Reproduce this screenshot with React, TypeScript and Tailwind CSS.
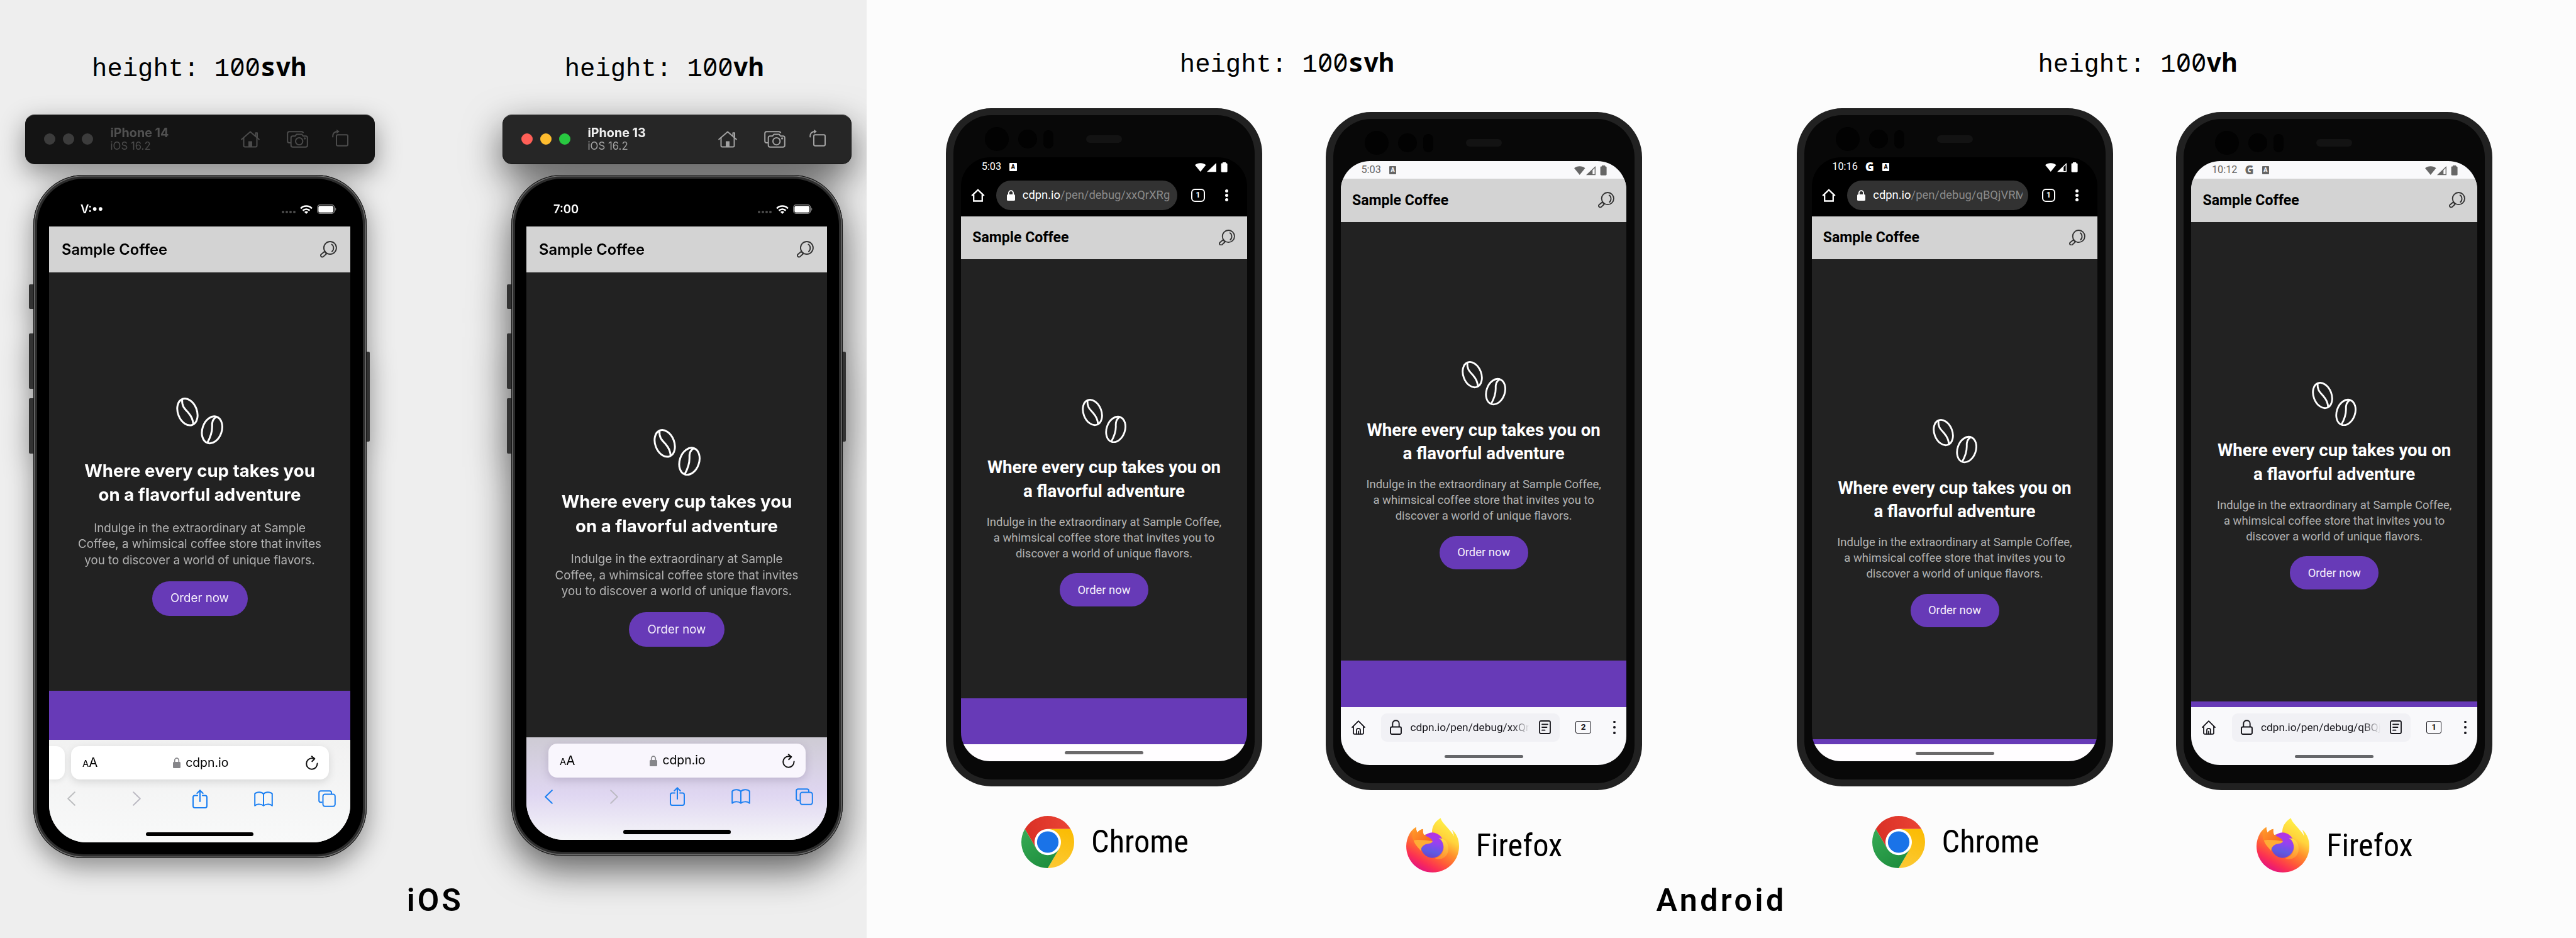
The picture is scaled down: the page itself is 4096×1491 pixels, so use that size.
import type { ReactNode } from "react";

/* ------------------------------------------------------------------ icons */

function Beans({ className }: { className: string }) {
  return (
    <svg className={className} viewBox="0 0 75 74.5" preserveAspectRatio="none" fill="none" stroke="#fff" strokeWidth="3">
      <ellipse cx="18" cy="22.8" rx="15.1" ry="22" transform="rotate(-21 18 22.8)" />
      <path d="M9.6 3.2C9 14 13.500 17.500 19 23.500C25 30.500 26.500 35 27.600 43" />
      <ellipse cx="57.2" cy="51.3" rx="15.400" ry="22" transform="rotate(19 57.2 51.3)" />
      <path d="M64.8 30C58 34 56.800 39 57.300 46.500C57.400 56 54 64 49.600 72" />
    </svg>
  );
}

function Magnifier({ className }: { className: string }) {
  return (
    <svg className={className} viewBox="0 0 27 26.500" preserveAspectRatio="none" fill="none" stroke="#333" strokeWidth="1.900">
      <circle cx="15.900" cy="11" r="10" />
      <path d="M18.400 5.500C22 7.500 22.400 14 18.900 16.800" strokeLinecap="round" />
      <path d="M8.400 18.300L10 20.500L5.200 24.900C3.800 26 2 25.500 1.300 24.200C0.700 23 1 21.800 2 21L6.800 17.100Z" strokeLinejoin="round" />
    </svg>
  );
}

function SimHome() {
  return (
    <svg className="h-[27px] w-[30px]" viewBox="0 0 30 27" fill="none" stroke="currentColor" strokeWidth="2" strokeLinecap="round" strokeLinejoin="round">
      <path d="M1.200 13.500L15 1.500L28.800 13.500M23.500 8.500V3.200H26V10.500" />
      <path d="M4.500 12V23.500C4.500 24.800 5.200 25.500 6.500 25.500H23.500C24.800 25.500 25.500 24.800 25.500 23.500V12" />
      <path d="M12 16.500H18V25H12Z" fill="currentColor" stroke="none" />
    </svg>
  );
}

function SimCamera() {
  return (
    <svg className="h-[27px] w-[34px]" viewBox="0 0 34 27" fill="none" stroke="currentColor" strokeWidth="2" strokeLinejoin="round">
      <path d="M6.500 19H4C2.200 19 1.200 18 1.200 16.200V4C1.200 2.200 2.200 1.200 4 1.200H23.500C25 1.200 26 2 26.400 3.600" />
      <path d="M9.500 8.200H13.500L15.500 5.600H24L26 8.200H30C31.800 8.200 32.800 9.200 32.800 11V23C32.800 24.800 31.800 25.800 30 25.800H9.500C7.700 25.800 6.700 24.800 6.700 23V11C6.700 9.200 7.700 8.200 9.500 8.200Z" />
      <circle cx="19.700" cy="16.600" r="5.700" />
      <circle cx="28.600" cy="12" r="0.700" />
    </svg>
  );
}

function SimRotate() {
  return (
    <svg className="h-[28px] w-[26px]" viewBox="0 0 26 28" fill="none" stroke="currentColor" strokeWidth="2" strokeLinejoin="round">
      <rect x="7" y="9.200" width="18" height="17.500" rx="2.200" />
      <path d="M1.200 12.500C0.800 7 3.500 4 10 4" strokeLinecap="round" />
      <path d="M7.200 0.800L11.800 4.100L7.200 7.400Z" fill="currentColor" stroke="none" />
    </svg>
  );
}

function IosWifi() {
  return (
    <svg className="h-[14px] w-[20px]" viewBox="0 0 20 14" fill="none" stroke="#fff" strokeWidth="2.600">
      <path d="M1.100 5.300C6 0.300 14 0.300 18.900 5.300" />
      <path d="M4.500 8.800C7.600 5.800 12.400 5.800 15.500 8.800" />
      <path d="M6.900 11C8.700 9.300 11.300 9.300 13.100 11L10 14Z" fill="#fff" stroke="none" />
    </svg>
  );
}

function IosBattery() {
  return (
    <svg className="h-[15px] w-[31px]" viewBox="0 0 31 15" fill="none">
      <rect x="0.700" y="0.700" width="27" height="13.600" rx="4" stroke="#8a8a8a" strokeWidth="1.200" />
      <rect x="2.300" y="2.200" width="23.800" height="10.600" rx="2.500" fill="#fff" />
      <path d="M29.200 5V10C30.700 9.300 30.700 5.700 29.200 5Z" fill="#8a8a8a" />
    </svg>
  );
}

function SolidLock({ className }: { className: string }) {
  return (
    <svg className={className} viewBox="0 0 12 17" preserveAspectRatio="none" fill="none">
      <path d="M2.700 8V4.800C2.700 0 9.300 0 9.300 4.800V8" stroke="currentColor" strokeWidth="1.700" />
      <rect y="7" width="12" height="10" rx="1.600" fill="currentColor" />
    </svg>
  );
}

function Refresh() {
  return (
    <svg className="h-[23px] w-[20px]" viewBox="0 0 20 23" fill="none" stroke="#111" strokeWidth="2" strokeLinecap="round" strokeLinejoin="round">
      <path d="M18.600 12.600C18.600 17.600 14.800 21.700 9.900 21.700C5 21.700 1.200 17.700 1.200 12.900C1.200 8 5.200 4.200 9.900 4.200C11.200 4.200 12.500 4.400 13.700 4.900" />
      <path d="M9.800 1.200L14.300 5L10.300 9.200" />
    </svg>
  );
}

function Chevron({ flip, className }: { flip?: boolean; className: string }) {
  return (
    <svg className={className} viewBox="0 0 13 23" fill="none" stroke="currentColor" strokeWidth="2" strokeLinecap="round" strokeLinejoin="round">
      {flip ? <path d="M1.200 1.200L11.800 11.500L1.200 21.800" /> : <path d="M11.800 1.200L1.200 11.500L11.800 21.800" />}
    </svg>
  );
}

function Share() {
  return (
    <svg className="ml-[82px] h-[30px] w-[24px]" viewBox="0 0 24 30" fill="none" stroke="currentColor" strokeWidth="2" strokeLinecap="round" strokeLinejoin="round">
      <path d="M8 9.500H3.800C2 9.500 1 10.500 1 12.300V26C1 27.900 2 28.900 3.800 28.900H20.200C22 28.900 23 27.900 23 26V12.300C23 10.500 22 9.500 20.200 9.500H16" />
      <path d="M12 19V1.300M7.300 6L12 1.300L16.700 6" />
    </svg>
  );
}

function Book() {
  return (
    <svg className="ml-[74px] h-[24px] w-[30px]" viewBox="0 0 30 24" fill="none" stroke="currentColor" strokeWidth="2" strokeLinejoin="round">
      <path d="M15 4C12 0.500 4.500 0.200 1.200 3.700V22.700C4.500 19.500 12 19.700 15 22.700C18 19.700 25.500 19.500 28.800 22.700V3.700C25.500 0.200 18 0.500 15 4ZM15 4V22.700" />
    </svg>
  );
}

function Tabs() {
  return (
    <svg className="ml-[71.500px] h-[27px] w-[28px]" viewBox="0 0 28 27" fill="none" stroke="currentColor" strokeWidth="2" strokeLinejoin="round">
      <path d="M6.500 19.300H4C2.200 19.300 1.200 18.300 1.200 16.500V4C1.200 2.200 2.200 1.200 4 1.200H18.200C20 1.200 21 2.200 21 4V6" />
      <rect x="7.500" y="6.500" width="19.300" height="19.300" rx="3.200" />
    </svg>
  );
}

function AndroidSignals({ hollow }: { hollow?: boolean }) {
  return (
    <svg className="h-[16px] w-[52px]" viewBox="0 0 52 16" fill="currentColor">
      <path d="M0 4.200C4.500 0.300 13 0.300 17.500 4.200L8.750 15Z" />
      {hollow ? (
        <path fillRule="evenodd" d="M34 1V15.300H19ZM32.600 4.300L29.300 7.600V14H32.600Z" />
      ) : (
        <path d="M34 1V15.300H19Z" />
      )}
      <path d="M44 0H49.200V1.600H50.200C51 1.600 51.600 2.200 51.600 3V14.300C51.600 15.100 51 15.700 50.200 15.700H43C42.200 15.700 41.600 15.100 41.600 14.300V3C41.600 2.200 42.200 1.600 43 1.600H44Z" />
    </svg>
  );
}

function ChromeHome() {
  return (
    <svg className="h-[21px] w-[22px]" viewBox="0 0 22 21" fill="none" stroke="#fff" strokeWidth="2.300" strokeLinejoin="miter">
      <path d="M1.200 11.200L11 1.800L20.800 11.200M4.200 9.500V19.500H17.800V9.500" />
    </svg>
  );
}

function FoxHome() {
  return (
    <svg className="h-[23px] w-[22px]" viewBox="0 0 22 23" fill="none" stroke="#15141a" strokeWidth="1.800" strokeLinecap="round" strokeLinejoin="round">
      <path d="M1 11.200L11 1.200L21 11.200M3 9.500V20C3 21.200 3.600 21.900 4.800 21.900H17.200C18.400 21.900 19 21.200 19 20V9.500" />
      <path d="M8 21.500V15.500C8 12 14 12 14 15.500V21.500M11 17.500V21.500" />
    </svg>
  );
}

function FoxLock() {
  return (
    <svg className="h-[24px] w-[19px]" viewBox="0 0 19 24" fill="none" stroke="#15141a" strokeWidth="1.900">
      <path d="M4.300 11.500V6.200C4.300 -0.500 14.700 -0.500 14.700 6.200V11.500" />
      <rect x="1" y="11.500" width="17" height="11.500" rx="2.200" />
    </svg>
  );
}

function FoxReader() {
  return (
    <svg className="h-[22px] w-[19px]" viewBox="0 0 19 22" fill="none" stroke="#15141a" strokeWidth="1.800" strokeLinecap="round">
      <rect x="1" y="1" width="17" height="20" rx="2.200" />
      <path d="M5 6.300H14M5 11H12.500M5 15.700H9.500" />
    </svg>
  );
}

function ChromeLogo() {
  return (
    <svg className="ml-[120px] h-[83px] w-[84px]" viewBox="0 0 48 48" preserveAspectRatio="none">
      <defs>
        <linearGradient id="chromeRed" x1="3" y1="18" x2="45" y2="12" gradientUnits="userSpaceOnUse">
          <stop stopColor="#d93025" />
          <stop offset="1" stopColor="#ea4335" />
        </linearGradient>
        <linearGradient id="chromeYellow" x1="27" y1="47" x2="38" y2="12" gradientUnits="userSpaceOnUse">
          <stop stopColor="#fcc934" />
          <stop offset="1" stopColor="#fbbc04" />
        </linearGradient>
        <linearGradient id="chromeGreen" x1="26" y1="46" x2="5" y2="14" gradientUnits="userSpaceOnUse">
          <stop stopColor="#1e8e3e" />
          <stop offset="1" stopColor="#34a853" />
        </linearGradient>
      </defs>
      <circle cx="24" cy="24" r="12.500" fill="#fff" />
      <path fill="url(#chromeRed)" d="M24 12H44.780A24 24 0 0 0 3.220 12L13.608 30A12 12 0 0 1 24 12Z" />
      <path fill="url(#chromeYellow)" d="M34.392 30L24 48A24 24 0 0 0 44.780 12H24A12 12 0 0 1 34.392 30Z" />
      <path fill="url(#chromeGreen)" d="M13.608 30L3.220 12A24 24 0 0 0 24 48L34.392 30A12 12 0 0 1 13.608 30Z" />
      <circle cx="24" cy="24" r="9.800" fill="#1a73e8" />
    </svg>
  );
}

function FirefoxLogo() {
  return (
    <svg className="ml-[128px] h-[87px] w-[84px]" viewBox="80 47 337 350" preserveAspectRatio="none">
      <defs>
        <linearGradient id="foxBody" x1="370" y1="90" x2="190" y2="395" gradientUnits="userSpaceOnUse">
          <stop stopColor="#fff147" />
          <stop offset="0.260" stopColor="#ffd43c" />
          <stop offset="0.480" stopColor="#ff8f2c" />
          <stop offset="0.680" stopColor="#ff5a38" />
          <stop offset="0.840" stopColor="#fb2f54" />
          <stop offset="1" stopColor="#e31380" />
        </linearGradient>
        <linearGradient id="foxGlobe" x1="270" y1="142" x2="230" y2="303" gradientUnits="userSpaceOnUse">
          <stop stopColor="#bb31e0" />
          <stop offset="0.400" stopColor="#9542f0" />
          <stop offset="0.750" stopColor="#5d5be4" />
          <stop offset="1" stopColor="#6a45c8" />
        </linearGradient>
        <linearGradient id="foxTail" x1="330" y1="180" x2="300" y2="310" gradientUnits="userSpaceOnUse">
          <stop stopColor="#ffe04a" />
          <stop offset="1" stopColor="#ff8c30" />
        </linearGradient>
        <linearGradient id="foxHead" x1="130" y1="110" x2="230" y2="210" gradientUnits="userSpaceOnUse">
          <stop stopColor="#ff9a2a" />
          <stop offset="1" stopColor="#f9651e" />
        </linearGradient>
      </defs>
      <path
        fill="url(#foxBody)"
        d="M142 106C143 120 146 130 150 142C160 130 172 120 187 118C186 132 187 142 192 156L245 145C242 108 258 75 299 48C306 72 330 95 352 120C368 138 380 155 384 166C382 150 378 135 371 122C400 145 417 185 417 228C417 322 342 396 248 396C155 396 80 322 80 228C82 170 108 125 142 106Z"
      />
      <ellipse cx="246" cy="222" rx="74" ry="81" fill="url(#foxGlobe)" />
      <path fill="url(#foxHead)" d="M142 106C143 120 146 130 150 142C160 130 172 120 187 118C186 132 187 142 192 156C215 168 242 178 248 195C215 197 165 186 127 191C112 175 122 130 142 106Z" />
      <path fill="#ffac35" d="M127 191C150 184 190 188 248 196C246 214 215 210 200 218C184 225 174 240 173 258C160 240 136 222 127 191Z" />
      <path fill="url(#foxTail)" d="M287 177C330 178 356 215 347 262C338 300 300 322 262 304C305 298 325 258 317 222C312 200 304 186 287 177Z" />
    </svg>
  );
}

/* ------------------------------------------------------------ page content */

function SiteHeader({ ios, className }: { ios?: boolean; className: string }) {
  return (
    <div className={`flex shrink-0 items-center justify-between bg-[#d3d3d3] ${className}`}>
      <span
        className={
          ios
            ? "text-[23.7px] leading-8 font-semibold whitespace-nowrap text-black"
            : "text-[23.1px] leading-8 font-bold whitespace-nowrap text-black"
        }
      >
        Sample Coffee
      </span>
      <Magnifier className={ios ? "h-[26.500px] w-[27px]" : "mb-px h-[25.500px] w-[26px]"} />
    </div>
  );
}

function IosHero({ className }: { className: string }) {
  return (
    <div className={`flex shrink-0 flex-col items-center bg-[#222] text-center ${className}`}>
      <Beans className="h-[74.500px] w-[75px]" />
      <h2 className="mt-[22px] text-[27.600px] leading-[38.800px] font-bold whitespace-nowrap text-white">
        Where every cup takes you
        <br />
        on a flavorful adventure
      </h2>
      <p className="mt-[20.500px] text-[18.750px] leading-[25.600px] whitespace-nowrap text-[#b2b2b2]">
        Indulge in the extraordinary at Sample
        <br />
        Coffee, a whimsical coffee store that invites
        <br />
        you to discover a world of unique flavors.
      </p>
      <span className="mt-[20.300px] flex h-[55px] w-[152px] items-center justify-center rounded-full bg-[#673ab7] text-[18.700px] text-[#f4eefb]">
        Order now
      </span>
    </div>
  );
}

function AndroidHero({ className }: { className: string }) {
  return (
    <div className={`flex shrink-0 flex-col items-center bg-[#222] text-center ${className}`}>
      <Beans className="h-[70.500px] w-[71px]" />
      <h2 className="mt-5 text-[27.700px] leading-[37.300px] font-bold whitespace-nowrap text-white">
        Where every cup takes you on
        <br />a flavorful adventure
      </h2>
      <p className="mt-[19px] text-[18.500px] leading-[25px] whitespace-nowrap text-[#b2b2b2]">
        Indulge in the extraordinary at Sample Coffee,
        <br />
        a whimsical coffee store that invites you to
        <br />
        discover a world of unique flavors.
      </p>
      <span className="mt-[18.200px] flex h-[53px] w-[141px] items-center justify-center rounded-full bg-[#673ab7] text-[18.400px] text-[#f4eefb]">
        Order now
      </span>
    </div>
  );
}

function Heading({ unit, className }: { unit: string; className: string }) {
  return (
    <h1 className={`text-center font-['Liberation_Mono',monospace] text-[40.600px] leading-[50px] whitespace-pre text-black ${className}`}>
      height: 1<span className="font-['Noto_Sans_Mono',monospace] leading-none">00<b className="font-bold">{unit}</b></span>
    </h1>
  );
}

/* ------------------------------------------------------------------ iPhone */

function IPhone({ active }: { active?: boolean }) {
  return (
    <div
      className={
        active
          ? "flex flex-col gap-[17px] drop-shadow-[0_22px_30px_rgba(0,0,0,0.62)]"
          : "flex flex-col gap-[17px] drop-shadow-[0_14px_20px_rgba(0,0,0,0.42)]"
      }
    >
      <div
        className={
          active
            ? "flex h-[78.600px] items-center rounded-[15px] border border-t-[#4d4d4d] border-r-[#141414] border-b-[#141414] border-l-[#141414] bg-[#262626] pl-[29px] text-[#a2a2a2]"
            : "flex h-[78.600px] items-center rounded-[15px] border border-t-[#404040] border-r-[#111] border-b-[#111] border-l-[#111] bg-[#141414] pl-[29px] text-[#4b4b4b]"
        }
      >
        <div className="flex gap-3">
          <i className={active ? "size-[18px] rounded-full bg-[#ff5f57]" : "size-[18px] rounded-full bg-[#3c3c3c]"} />
          <i className={active ? "size-[18px] rounded-full bg-[#febc2e]" : "size-[18px] rounded-full bg-[#3c3c3c]"} />
          <i className={active ? "size-[18px] rounded-full bg-[#28c840]" : "size-[18px] rounded-full bg-[#3c3c3c]"} />
        </div>
        <div className="ml-[28px] flex w-[207px] flex-col">
          <span
            className={
              active
                ? "text-[19.700px] leading-[22px] font-bold whitespace-nowrap text-[#efefef]"
                : "text-[19.700px] leading-[22px] font-bold whitespace-nowrap text-[#505050]"
            }
          >
            {active ? "iPhone 13" : "iPhone 14"}
          </span>
          <span className="text-[16.800px] leading-[21px] whitespace-nowrap">iOS 16.2</span>
        </div>
        <div className="flex items-center gap-[43px]">
          <SimHome />
          <SimCamera />
          <span className="-mt-1 -ml-[5px]">
            <SimRotate />
          </span>
        </div>
      </div>

      <div
        className={
          active
            ? "relative mx-auto flex h-[1082.500px] w-[527px] flex-col items-center rounded-[80px] bg-black shadow-[inset_0_0_0_1px_#161616,inset_0_0_0_2.500px_#6e6e6e,inset_0_0_0_6px_#2c2c2c]"
            : "relative mx-auto flex h-[1086.700px] w-[530px] flex-col items-center rounded-[80px] bg-black shadow-[inset_0_0_0_1px_#161616,inset_0_0_0_2.500px_#6e6e6e,inset_0_0_0_6px_#2c2c2c]"
        }
      >
        <i className="absolute top-[174px] left-[-7px] h-[39px] w-[7px] rounded-l-[2px] bg-[#333]" />
        <i className="absolute top-[252px] left-[-7px] h-[88px] w-[7px] rounded-l-[2px] bg-[#333]" />
        <i className="absolute top-[355px] left-[-7px] h-[88px] w-[7px] rounded-l-[2px] bg-[#333]" />
        <i className="absolute top-[281px] right-[-5px] h-[143px] w-[5px] rounded-r-[2px] bg-[#333]" />

        <div
          className={
            active
              ? "flex h-[82.200px] w-[478px] items-center justify-between pt-[28px] pr-[23px] pl-[43px]"
              : "flex h-[82.200px] w-[479px] items-center justify-between pt-[28px] pr-[22px] pl-[50px]"
          }
        >
          <span className="text-[18.400px] leading-none font-semibold text-white">{active ? "7:00" : "V:••"}</span>
          <div className="flex items-center">
            <div className="mt-[9px] mr-[7px] flex gap-[2px]">
              <i className="size-1 rounded-full bg-[#4c4c4c]" />
              <i className="size-1 rounded-full bg-[#4c4c4c]" />
              <i className="size-1 rounded-full bg-[#4c4c4c]" />
              <i className="size-1 rounded-full bg-[#4c4c4c]" />
            </div>
            <IosWifi />
            <span className="ml-[7px]">
              <IosBattery />
            </span>
          </div>
        </div>

        <div
          className={
            active
              ? "flex h-[975.700px] w-[478px] flex-col overflow-hidden rounded-b-[60px] bg-[#f3f3f6]"
              : "flex h-[979px] w-[479px] flex-col overflow-hidden rounded-b-[60px] bg-[#f6f7f7]"
          }
        >
          <SiteHeader ios className="h-[73.600px] pr-[21px] pl-[20px]" />
          {active ? <IosHero className="h-[739px] pt-[248.200px]" /> : <IosHero className="h-[664.200px] pt-[198.800px]" />}
          {!active && <div className="h-[78.200px] shrink-0 bg-[#673ab7]" />}
          <div
            className={
              active
                ? "flex flex-1 flex-col bg-linear-to-b from-[#cecbd4] via-[#dfd6f1] via-55% to-[#f5f5f8] pt-[10px]"
                : "flex flex-1 flex-col bg-linear-to-b from-[#f1f1f1] to-[#f8f9f9] pt-[10px]"
            }
          >
            <div className="flex gap-[10px]">
              <div className={active ? "w-[25px]" : "w-[25px] rounded-r-[14px] bg-white shadow-[0_3px_8px_rgba(0,0,0,0.08)]"} />
              <div
                className={
                  active
                    ? "flex h-[53.500px] w-[408.500px] items-center rounded-[14px] bg-[#f9f6fd] pr-[17px] pl-[18px] shadow-[0_4px_14px_rgba(80,60,110,0.22)]"
                    : "flex h-[53.500px] w-[410px] items-center rounded-[14px] bg-white pr-[17px] pl-[18px] shadow-[0_4px_14px_rgba(0,0,0,0.12)]"
                }
              >
                <span className="leading-none text-black">
                  <span className="text-[15px]">A</span>
                  <span className="text-[20.500px]">A</span>
                </span>
                <div className="flex flex-1 items-center justify-center gap-[8px] pr-[3px]">
                  <SolidLock className="h-[17px] w-[12px] text-[#86868a]" />
                  <span className="text-[19.400px] leading-none text-black">cdpn.io</span>
                </div>
                <Refresh />
              </div>
            </div>
            <div className="mt-[15px] flex h-[31px] items-center pl-[29px] text-[#1c80f2]">
              <Chevron className={active ? "h-[23px] w-[13px]" : "h-[23px] w-[13px] text-[#bdbec0]"} />
              <Chevron flip className="ml-[91px] h-[23px] w-[13px] text-[#bdbbc4]" />
              <Share />
              <Book />
              <Tabs />
            </div>
            <div className="mt-[37.500px] ml-[154px] h-[6.500px] w-[171px] rounded-full bg-black" />
          </div>
        </div>
      </div>
    </div>
  );
}

/* ----------------------------------------------------------------- Android */

function AndroidFrame({ className, children }: { className: string; children: ReactNode }) {
  return (
    <div className={`flex h-[1078px] w-[503px] flex-col items-center rounded-[72px] border-x-[12px] border-y-[11px] border-[#212121] bg-[#080808] ${className}`}>
      <div className="flex h-[66.500px] w-full shrink-0 items-center pt-[9.700px] pl-[50px]">
        <i className="size-[38px] rounded-full bg-[#020202]" />
        <i className="ml-[15px] size-[30px] rounded-full bg-[#020202]" />
        <i className="ml-[10px] h-[29px] w-[16px] rounded-full bg-[#020202]" />
        <i className="ml-[52px] h-[11.500px] w-[57px] rounded-full bg-[#131313]" />
      </div>
      {children}
    </div>
  );
}

function StatusLeft({ time, google, tone }: { time: string; google?: boolean; tone: string }) {
  return (
    <div className="flex items-center">
      <span className="text-[16.300px] leading-none">{time}</span>
      {google && <span className="ml-[12px] font-['Open_Sans'] text-[19px] leading-none font-extrabold">G</span>}
      <span className="ml-[13px] flex h-[12.500px] w-[11.500px] items-center justify-center rounded-[1px] bg-current">
        <span className={`text-[9px] leading-none font-black ${tone}`}>A</span>
      </span>
    </div>
  );
}

function ChromePhone({ time, google, path, hero, footer }: { time: string; google?: boolean; path: string; hero: string; footer: string }) {
  return (
    <AndroidFrame className="">
      <div className="flex h-[960.800px] w-[454.500px] flex-col overflow-hidden rounded-[46px] bg-black text-white">
        <div className="flex h-[32px] shrink-0 items-center justify-between pr-[31px] pl-[32.500px]">
          <StatusLeft time={time} google={google} tone="text-black" />
          <AndroidSignals hollow={google} />
        </div>
        <div className="flex h-[62.600px] shrink-0 items-center pb-[5px] pl-[16px]">
          <ChromeHome />
          <div className="ml-[18px] flex h-[46.500px] w-[288px] items-center overflow-hidden rounded-full bg-[#323232] pr-[9px] pl-[16.500px]">
            <SolidLock className="h-[17px] w-[13px] shrink-0" />
            <span className="ml-[12px] flex-1 overflow-hidden text-[18.400px] leading-[26px] whitespace-nowrap">
              cdpn.io<span className="text-[#8a8a8a]">{path}</span>
            </span>
          </div>
          <span className="ml-[22px] flex size-[21.500px] items-center justify-center rounded-[6px] border-[2.300px] border-white text-[12px] leading-none font-bold">
            1
          </span>
          <span className="ml-[32px] flex flex-col gap-[2px]">
            <i className="size-[5px] rounded-full bg-white" />
            <i className="size-[5px] rounded-full bg-white" />
            <i className="size-[5px] rounded-full bg-white" />
          </span>
        </div>
        <SiteHeader className="h-[68.300px] pr-[19px] pl-[18px]" />
        <AndroidHero className={hero} />
        <div className={`shrink-0 bg-[#673ab7] ${footer}`} />
        <div className="flex flex-1 justify-center bg-[#fffdff] pt-[11.500px]">
          <i className="h-[5px] w-[125px] rounded-full bg-[#6b696b]" />
        </div>
      </div>
    </AndroidFrame>
  );
}

function FirefoxPhone({
  time,
  google,
  path,
  tabs,
  hero,
  footer,
}: {
  time: string;
  google?: boolean;
  path: string;
  tabs: string;
  hero: string;
  footer: string;
}) {
  return (
    <AndroidFrame className="mt-[6px]">
      <div className="flex h-[960.300px] w-[454.500px] flex-col overflow-hidden rounded-[46px] bg-[#f9f9fb]">
        <div className="flex h-[28px] shrink-0 items-center justify-between pt-[2px] pr-[31px] pl-[32.500px] text-[#666]">
          <StatusLeft time={time} google={google} tone="text-[#f9f9fb]" />
          <AndroidSignals hollow />
        </div>
        <SiteHeader className="h-[69px] pt-[1px] pr-[19px] pl-[18px]" />
        <AndroidHero className={hero} />
        <div className={`shrink-0 bg-[#673ab7] ${footer}`} />
        <div className="flex flex-1 flex-col items-center pt-[9.500px]">
          <div className="flex w-full items-center pl-[17px]">
            <FoxHome />
            <div className="ml-[25.500px] flex h-[45.300px] w-[284px] items-center rounded-[9px] bg-[#f1f1f5] pl-[14px]">
              <FoxLock />
              <span className="ml-[13px] w-[190px] mask-r-from-85% mask-r-to-100% text-[17.300px] leading-[26px] whitespace-nowrap text-[#15141a]">
                cdpn.io{path}
              </span>
              <span className="ml-[15px]">
                <FoxReader />
              </span>
            </div>
            <span className="ml-[25px] flex h-[20px] w-[24.500px] items-center justify-center rounded-[3px] border-[1.800px] border-[#15141a] text-[13.500px] leading-none font-bold text-[#15141a]">
              {tabs}
            </span>
            <span className="ml-[35.500px] flex flex-col gap-[5px]">
              <i className="size-[3.800px] rounded-full bg-[#15141a]" />
              <i className="size-[3.800px] rounded-full bg-[#15141a]" />
              <i className="size-[3.800px] rounded-full bg-[#15141a]" />
            </span>
          </div>
          <i className="mt-[21px] h-[5px] w-[125px] rounded-full bg-[#66676a]" />
        </div>
      </div>
    </AndroidFrame>
  );
}

function ChromeLabel() {
  return (
    <div className="mt-[46.700px] flex items-center gap-[27px]">
      <ChromeLogo />
      <span className="text-[50.500px] leading-none text-black [font-stretch:75%]">Chrome</span>
    </div>
  );
}

function FirefoxLabel() {
  return (
    <div className="mt-[43.800px] flex items-center gap-[27px]">
      <FirefoxLogo />
      <span className="pt-[2px] text-[50.500px] leading-none text-black [font-stretch:75%]">Firefox</span>
    </div>
  );
}

/* --------------------------------------------------------------------- app */

export default function App() {
  return (
    <main className="flex h-[1491px] w-[4096px] overflow-hidden bg-[#fcfcfc]">
      <section className="flex w-[1378px] shrink-0 flex-col overflow-hidden bg-[#eee] pt-[85px] pl-[39.500px] font-['Inter',sans-serif]">
        <div className="flex gap-[203px]">
          <div className="w-[556px]">
            <Heading unit="svh" className="mb-[47px] pr-[2px]" />
            <IPhone />
          </div>
          <div className="w-[555px]">
            <Heading unit="vh" className="mb-[47px] pr-[40px]" />
            <IPhone active />
          </div>
        </div>
        <h2 className="mt-auto mb-[30px] pr-[34px] text-center font-['Roboto',sans-serif] text-[50px] leading-[60px] font-semibold tracking-[4px] text-black">
          iOS
        </h2>
      </section>

      <section className="flex flex-1 flex-col pt-[78px] font-['Roboto',sans-serif]">
        <div className="flex gap-[246px] pl-[126px]">
          <div className="w-[1106.500px]">
            <Heading unit="svh" className="mb-[44px] pr-[22px]" />
            <div className="flex gap-[100.700px]">
              <div className="w-[503px]">
                <ChromePhone time="5:03" path="/pen/debug/xxQrXRg" hero="h-[697.400px] pt-[221.600px]" footer="h-[73.200px]" />
                <ChromeLabel />
              </div>
              <div className="w-[503px]">
                <FirefoxPhone time="5:03" path="/pen/debug/xxQr" tabs="2" hero="h-[697.400px] pt-[221.800px]" footer="h-[74.200px]" />
                <FirefoxLabel />
              </div>
            </div>
          </div>
          <div className="w-[1106.500px]">
            <Heading unit="vh" className="mb-[44px] pr-[22px]" />
            <div className="flex gap-[100.700px]">
              <div className="w-[503px]">
                <ChromePhone time="10:16" google path="/pen/debug/qBQjVRM" hero="h-[762.400px] pt-[254px]" footer="h-[8.500px]" />
                <ChromeLabel />
              </div>
              <div className="w-[503px]">
                <FirefoxPhone time="10:12" google path="/pen/debug/qBQj" tabs="1" hero="h-[762.100px] pt-[254.300px]" footer="h-[9.500px]" />
                <FirefoxLabel />
              </div>
            </div>
          </div>
        </div>
        <h2 className="mt-auto mb-[30px] text-center text-[50px] leading-[60px] font-semibold tracking-[4.500px] text-black">Android</h2>
      </section>
    </main>
  );
}
